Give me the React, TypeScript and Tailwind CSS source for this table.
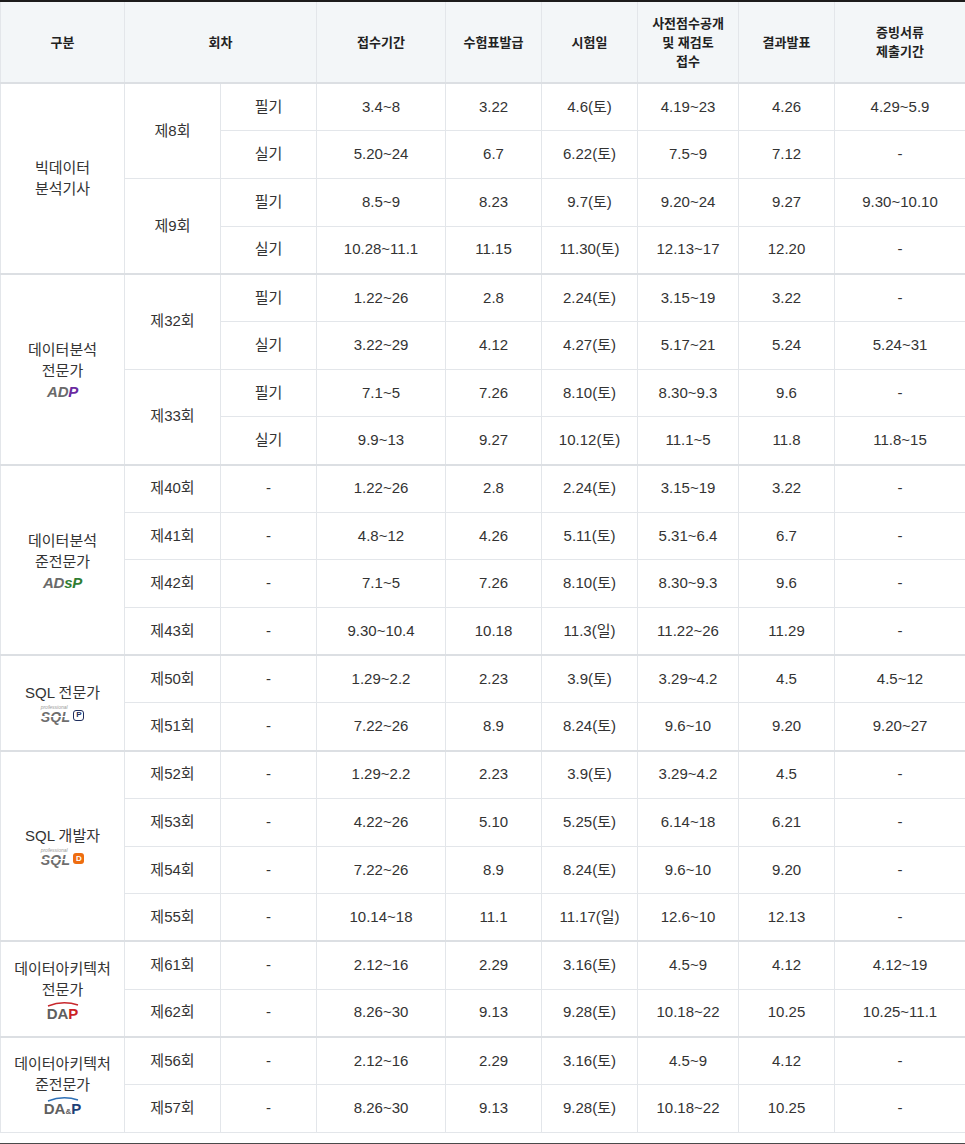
import type { ReactNode } from "react";

type Row = { kind: string; cells: string[] };
type Session = { name: string; rows: Row[] };
type Group = { label: string[]; logo?: ReactNode; sessions: Session[] };

const headers = [
  { key: "g", lines: ["구분"] },
  { key: "r", lines: ["회차"], span: 2 },
  { key: "a", lines: ["접수기간"] },
  { key: "b", lines: ["수험표발급"] },
  { key: "c", lines: ["시험일"] },
  { key: "d", lines: ["사전점수공개", "및 재검토", "접수"] },
  { key: "e", lines: ["결과발표"] },
  { key: "f", lines: ["증빙서류", "제출기간"] },
];

function AdpLogo() {
  return (
    <span className="mt-[3px] inline-flex italic font-black text-[15px] leading-none tracking-[-0.3px] [font-family:'Liberation_Sans',sans-serif]">
      <span className="text-[#6a6a6a]">AD</span>
      <span className="text-[#6b2aa0]">P</span>
    </span>
  );
}

function AdspLogo() {
  return (
    <span className="mt-[3px] inline-flex italic font-black text-[15px] leading-none tracking-[-0.3px] [font-family:'Liberation_Sans',sans-serif]">
      <span className="text-[#6a6a6a]">AD</span>
      <span className="text-[#2f7d32]">sP</span>
    </span>
  );
}

function SqlLogo({ badge, tone }: { badge: string; tone: "p" | "d" }) {
  return (
    <span className="mt-[1px] inline-flex items-end gap-[3px]">
      <span className="flex flex-col items-start">
        <span className="text-[5px] leading-[6px] italic text-[#9a9a9a] [font-family:'Liberation_Sans',sans-serif]">
          professional
        </span>
        <span className="relative italic font-black text-[14px] leading-none tracking-[0.3px] text-[#6e6e6e] [font-family:'Liberation_Sans',sans-serif]">
          SQL
          <span className="absolute left-0 right-0 top-[6px] h-px bg-white" />
        </span>
      </span>
      <span
        className={
          tone === "p"
            ? "mb-[3px] flex h-[11px] w-[11px] items-center justify-center rounded-[3px] border-[1.5px] border-[#1f2d5c] bg-white text-[8px] font-black leading-none text-[#1f2d5c] [font-family:'Liberation_Sans',sans-serif]"
            : "mb-[3px] flex h-[11px] w-[11px] items-center justify-center rounded-[3px] bg-[#ee6d10] text-[8px] font-black leading-none text-white [font-family:'Liberation_Sans',sans-serif]"
        }
      >
        {badge}
      </span>
    </span>
  );
}

function DapLogo({ amp }: { amp?: boolean }) {
  const arc = amp ? "#2d6fb5" : "#c8282d";
  return (
    <span className="mt-[2px] inline-flex flex-col items-center">
      <svg width="34" height="5" viewBox="0 0 34 5">
        <path d="M2 4 Q 17 -2 32 3" fill="none" stroke={arc} strokeWidth="1.4" />
      </svg>
      <span className="-mt-px inline-flex items-baseline font-black text-[15px] leading-none [font-family:'Liberation_Sans',sans-serif]">
        <span className="text-[#5f5f5f]">DA</span>
        {amp && <span className="text-[8px] text-[#5f5f5f]">&amp;</span>}
        <span className={amp ? "text-[#1e3f78]" : "text-[#cc1f26]"}>P</span>
      </span>
    </span>
  );
}

const one = (name: string, cells: string[]): Session => ({
  name,
  rows: [{ kind: "-", cells }],
});

const groups: Group[] = [
  {
    label: ["빅데이터", "분석기사"],
    sessions: [
      {
        name: "제8회",
        rows: [
          { kind: "필기", cells: ["3.4~8", "3.22", "4.6(토)", "4.19~23", "4.26", "4.29~5.9"] },
          { kind: "실기", cells: ["5.20~24", "6.7", "6.22(토)", "7.5~9", "7.12", "-"] },
        ],
      },
      {
        name: "제9회",
        rows: [
          { kind: "필기", cells: ["8.5~9", "8.23", "9.7(토)", "9.20~24", "9.27", "9.30~10.10"] },
          { kind: "실기", cells: ["10.28~11.1", "11.15", "11.30(토)", "12.13~17", "12.20", "-"] },
        ],
      },
    ],
  },
  {
    label: ["데이터분석", "전문가"],
    logo: <AdpLogo />,
    sessions: [
      {
        name: "제32회",
        rows: [
          { kind: "필기", cells: ["1.22~26", "2.8", "2.24(토)", "3.15~19", "3.22", "-"] },
          { kind: "실기", cells: ["3.22~29", "4.12", "4.27(토)", "5.17~21", "5.24", "5.24~31"] },
        ],
      },
      {
        name: "제33회",
        rows: [
          { kind: "필기", cells: ["7.1~5", "7.26", "8.10(토)", "8.30~9.3", "9.6", "-"] },
          { kind: "실기", cells: ["9.9~13", "9.27", "10.12(토)", "11.1~5", "11.8", "11.8~15"] },
        ],
      },
    ],
  },
  {
    label: ["데이터분석", "준전문가"],
    logo: <AdspLogo />,
    sessions: [
      one("제40회", ["1.22~26", "2.8", "2.24(토)", "3.15~19", "3.22", "-"]),
      one("제41회", ["4.8~12", "4.26", "5.11(토)", "5.31~6.4", "6.7", "-"]),
      one("제42회", ["7.1~5", "7.26", "8.10(토)", "8.30~9.3", "9.6", "-"]),
      one("제43회", ["9.30~10.4", "10.18", "11.3(일)", "11.22~26", "11.29", "-"]),
    ],
  },
  {
    label: ["SQL 전문가"],
    logo: <SqlLogo badge="P" tone="p" />,
    sessions: [
      one("제50회", ["1.29~2.2", "2.23", "3.9(토)", "3.29~4.2", "4.5", "4.5~12"]),
      one("제51회", ["7.22~26", "8.9", "8.24(토)", "9.6~10", "9.20", "9.20~27"]),
    ],
  },
  {
    label: ["SQL 개발자"],
    logo: <SqlLogo badge="D" tone="d" />,
    sessions: [
      one("제52회", ["1.29~2.2", "2.23", "3.9(토)", "3.29~4.2", "4.5", "-"]),
      one("제53회", ["4.22~26", "5.10", "5.25(토)", "6.14~18", "6.21", "-"]),
      one("제54회", ["7.22~26", "8.9", "8.24(토)", "9.6~10", "9.20", "-"]),
      one("제55회", ["10.14~18", "11.1", "11.17(일)", "12.6~10", "12.13", "-"]),
    ],
  },
  {
    label: ["데이터아키텍처", "전문가"],
    logo: <DapLogo />,
    sessions: [
      one("제61회", ["2.12~16", "2.29", "3.16(토)", "4.5~9", "4.12", "4.12~19"]),
      one("제62회", ["8.26~30", "9.13", "9.28(토)", "10.18~22", "10.25", "10.25~11.1"]),
    ],
  },
  {
    label: ["데이터아키텍처", "준전문가"],
    logo: <DapLogo amp />,
    sessions: [
      one("제56회", ["2.12~16", "2.29", "3.16(토)", "4.5~9", "4.12", "-"]),
      one("제57회", ["8.26~30", "9.13", "9.28(토)", "10.18~22", "10.25", "-"]),
    ],
  },
];

const cell = "border border-[#e3e6ea] text-center align-middle";

export default function App() {
  return (
    <div className="min-h-screen bg-white text-[15px] text-[#333] [font-family:'Liberation_Sans','Noto_Sans_CJK_KR',sans-serif]">
      <table className="w-[965px] table-fixed border-collapse">
        <colgroup>
          <col className="w-[124px]" />
          <col className="w-[96px]" />
          <col className="w-[96px]" />
          <col className="w-[129px]" />
          <col className="w-[96px]" />
          <col className="w-[96px]" />
          <col className="w-[101px]" />
          <col className="w-[96px]" />
          <col className="w-[131px]" />
        </colgroup>
        <thead>
          <tr>
            {headers.map((h) => (
              <th
                key={h.key}
                colSpan={h.span}
                className={`${cell} h-[82px] border-t-2 border-t-[#1c1c1c] border-b-2 border-b-[#dcdfe3] bg-[#f3f6f8] text-[13px] font-bold leading-[19px] text-[#222]`}
              >
                {h.lines.map((l) => (
                  <div key={l}>{l}</div>
                ))}
              </th>
            ))}
          </tr>
        </thead>
        <tbody>
          {groups.map((g, gi) => {
            const total = g.sessions.reduce((n, s) => n + s.rows.length, 0);
            return g.sessions.map((s, si) =>
              s.rows.map((r, ri) => {
                const first = si === 0 && ri === 0;
                const top = first && gi > 0 ? "border-t-2 border-t-[#dcdfe3]" : "";
                return (
                  <tr key={`${gi}-${si}-${ri}`} className="h-[47.7px]">
                    {first && (
                      <td rowSpan={total} className={`${cell} ${top} leading-[21px]`}>
                        <div className="flex flex-col items-center">
                          {g.label.map((l) => (
                            <span key={l}>{l}</span>
                          ))}
                          {g.logo}
                        </div>
                      </td>
                    )}
                    {ri === 0 && (
                      <td rowSpan={s.rows.length} className={`${cell} ${top}`}>
                        {s.name}
                      </td>
                    )}
                    <td className={`${cell} ${top}`}>{r.kind}</td>
                    {r.cells.map((c, ci) => (
                      <td key={ci} className={`${cell} ${top}`}>
                        {c}
                      </td>
                    ))}
                  </tr>
                );
              })
            );
          })}
        </tbody>
      </table>
      <div className="mt-[10px] h-[2px] bg-[#4a4a4a]" />
    </div>
  );
}
